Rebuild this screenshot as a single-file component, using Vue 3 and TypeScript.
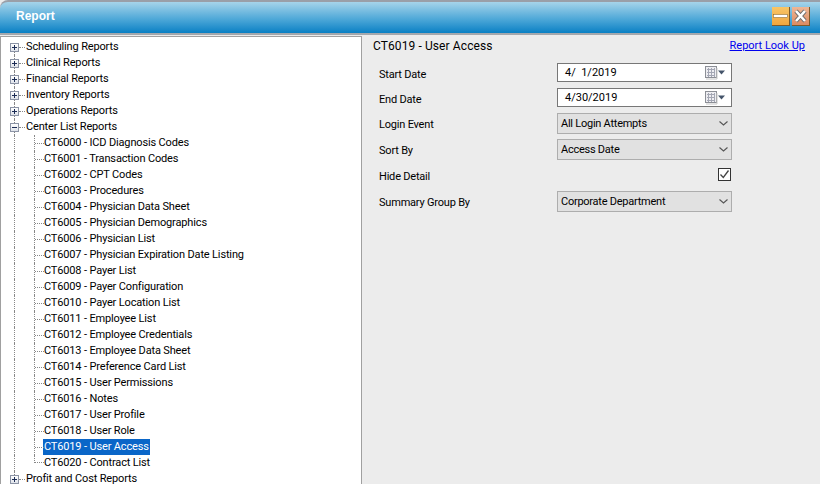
<script setup lang="ts">
const topBefore = ['Scheduling Reports', 'Clinical Reports', 'Financial Reports', 'Inventory Reports', 'Operations Reports']
const children = [
  'CT6000 - ICD Diagnosis Codes', 'CT6001 - Transaction Codes', 'CT6002 - CPT Codes', 'CT6003 - Procedures',
  'CT6004 - Physician Data Sheet', 'CT6005 - Physician Demographics', 'CT6006 - Physician List',
  'CT6007 - Physician Expiration Date Listing', 'CT6008 - Payer List', 'CT6009 - Payer Configuration',
  'CT6010 - Payer Location List', 'CT6011 - Employee List', 'CT6012 - Employee Credentials',
  'CT6013 - Employee Data Sheet', 'CT6014 - Preference Card List', 'CT6015 - User Permissions',
  'CT6016 - Notes', 'CT6017 - User Profile', 'CT6018 - User Role', 'CT6019 - User Access', 'CT6020 - Contract List'
]
</script>

<template>
  <div class="window">
    <header class="titlebar">
      <span class="title">Report</span>
      <div class="controls">
        <button class="ctl min"><svg width="17" height="18" viewBox="0 0 17 18"><rect x="1.500" y="7.500" width="14" height="3" fill="#fff" stroke="#7a5a20" stroke-width=".5"/></svg></button>
        <button class="ctl close"><svg width="17" height="18" viewBox="0 0 17 18"><path d="M4 4l9 10M13 4L4 14" stroke="#6b6b6b" stroke-width="4.200"/><path d="M4 4l9 10M13 4L4 14" stroke="#fff" stroke-width="2.600"/></svg></button>
      </div>
    </header>
    <main class="body">
      <aside class="tree">
        <div v-for="t in topBefore" :key="t" class="row root">
          <span class="box"><i class="h"></i><i class="v"></i></span><span class="dash"></span><span class="label">{{ t }}</span>
        </div>
        <div class="row root">
          <span class="box"><i class="h"></i></span><span class="dash"></span><span class="label">Center List Reports</span>
        </div>
        <div v-for="(c, i) in children" :key="c" class="row child" :class="{ last: i === children.length - 1 }">
          <span class="elbow"></span>
          <span class="label" :class="{ selected: c.startsWith('CT6019') }">{{ c }}</span>
        </div>
        <div class="row root">
          <span class="box"><i class="h"></i><i class="v"></i></span><span class="dash"></span><span class="label">Profit and Cost Reports</span>
        </div>
      </aside>
      <section class="panel">
        <div class="head">
          <span class="heading">CT6019 - User Access</span>
          <a class="link" href="#">Report Look Up</a>
        </div>
        <div class="form">
          <label>Start Date</label>
          <div class="date"><span>4/&nbsp;&nbsp;1/2019</span>
            <svg width="27" height="15" viewBox="0 0 27 15"><rect x="1.500" y="1.500" width="11" height="11" fill="#eeeef2" stroke="#8c8f96"/><path d="M3 4.500h8M3 7.500h8M3 10.500h8M4.500 3v9M7.500 3v9M10.500 3v9" stroke="#a4a7b4"/><path d="M2 14h11V3" fill="none" stroke="#c8c8c8"/><path d="M14 5.500h7l-3.500 4z" fill="#44546a"/></svg>
          </div>
          <label>End Date</label>
          <div class="date"><span>4/30/2019</span>
            <svg width="27" height="15" viewBox="0 0 27 15"><rect x="1.500" y="1.500" width="11" height="11" fill="#eeeef2" stroke="#8c8f96"/><path d="M3 4.500h8M3 7.500h8M3 10.500h8M4.500 3v9M7.500 3v9M10.500 3v9" stroke="#a4a7b4"/><path d="M2 14h11V3" fill="none" stroke="#c8c8c8"/><path d="M14 5.500h7l-3.500 4z" fill="#44546a"/></svg>
          </div>
          <label>Login Event</label>
          <div class="select"><span>All Login Attempts</span><svg width="9" height="5" viewBox="0 0 9 5"><path d="M.5.500l4 3.500 4-3.500" fill="none" stroke="#555" stroke-width="1.100"/></svg></div>
          <label>Sort By</label>
          <div class="select"><span>Access Date</span><svg width="9" height="5" viewBox="0 0 9 5"><path d="M.5.500l4 3.500 4-3.500" fill="none" stroke="#555" stroke-width="1.100"/></svg></div>
          <label>Hide Detail</label>
          <div class="check-cell"><span class="check"><svg width="11" height="11" viewBox="0 0 11 11"><path d="M1.500 5.500l2.800 3 5.200-7" fill="none" stroke="#444" stroke-width="1.300"/></svg></span></div>
          <label>Summary Group By</label>
          <div class="select"><span>Corporate Department</span><svg width="9" height="5" viewBox="0 0 9 5"><path d="M.5.500l4 3.500 4-3.500" fill="none" stroke="#555" stroke-width="1.100"/></svg></div>
        </div>
      </section>
    </main>
  </div>
</template>

<style>
html, body { margin: 0; background: #ececec; }
</style>

<style scoped>
.window {
  width: 820px; height: 484px; overflow: hidden; display: flex; flex-direction: column;
  background: #ececec; font: 11px Roboto, "Liberation Sans", Arial, sans-serif; color: #000;
}
.titlebar {
  height: 31px; flex: none; display: flex; align-items: center; justify-content: space-between;
  padding: 0 10px 0 16px; border-top: 2px solid #9a9fa8; border-bottom: 2px solid #a4a8ad;
  border-top-left-radius: 8px; background: linear-gradient(#a6d4ea, #4ea8d8 55%, #0a80c4);
}
.title { color: #fff; font: 700 12px "Liberation Sans", Arial, sans-serif; margin-bottom: 4px; }
.controls { display: flex; gap: 2px; margin-bottom: 2px; }
.ctl {
  width: 17px; height: 18px; padding: 0; display: block; border: 0; border-right: 1px solid #7b5a2a;
  border-bottom: 1px solid #7b5a2a; box-sizing: content-box;
}
.ctl svg { display: block; }
.min { background: linear-gradient(#f8c566, #f0a63f); }
.close { background: linear-gradient(#eeb696, #dc8b62); }
.body { flex: 1; display: flex; min-height: 0; padding-top: 1px; }
.tree {
  width: 360px; flex: none; background: #fff; padding-top: 2px;
  border: solid #a0a0a0; border-width: 1px 1px 0 1px; overflow: hidden;
}
.row { height: 16px; display: flex; align-items: center; white-space: nowrap; position: relative; letter-spacing: -0.15px; }
.root { padding-left: 9px; }
.root::before {
  content: ""; position: absolute; left: 13px; top: 0; bottom: 0; border-left: 1px dotted #888;
}
.root:first-child::before { top: 8px; }
.box {
  width: 7px; height: 7px; border: 1px solid #8c94a6; background: linear-gradient(#fff, #dfe3ea);
  flex: none; position: relative; z-index: 1;
}
.box .h { position: absolute; left: 1px; top: 3px; width: 5px; height: 1px; background: #1c2c55; }
.box .v { position: absolute; left: 3px; top: 1px; width: 1px; height: 5px; background: #1c2c55; }
.dash { width: 6px; margin-right: 0; border-top: 1px dotted #888; flex: none; }
.label { padding: 0 1px; line-height: 16px; }
.child { padding-left: 42px; }
.child::before {
  content: ""; position: absolute; left: 13px; top: 0; bottom: 0; border-left: 1px dotted #888;
}
.elbow {
  position: absolute; left: 33px; top: 0; bottom: 0; width: 9px; border-left: 1px dotted #888;
}
.last .elbow { bottom: 8px; border-bottom: 1px dotted #888; }
.child:not(.last) .elbow::after {
  content: ""; position: absolute; left: 0; top: 8px; width: 9px; border-top: 1px dotted #888;
}
.selected { background: #0a66c8; color: #fff; }
.panel { flex: 1; min-width: 0; padding: 1px 15px 0 11px; }
.head { display: flex; justify-content: space-between; align-items: center; height: 17px; }
.heading { font-size: 12px; letter-spacing: 0.1px; }
.link { color: #0000ee; text-decoration: underline; }
.form {
  margin: 9px 0 0 6px; display: grid; grid-template-columns: 178px 175px;
  grid-template-rows: 25px 25px 26px 26px 26px 21px;
  align-items: start; letter-spacing: -0.2px;
}
.form label { line-height: 24px; }
.date {
  height: 19px; box-sizing: border-box; border: 1px solid #777; background: #fff; display: flex;
  align-items: center; justify-content: space-between; padding: 0 0 0 7px; letter-spacing: 0;
}
.select {
  height: 21px; box-sizing: border-box; border: 1px solid #adadad; background: #e1e1e1; display: flex;
  align-items: center; justify-content: space-between; padding: 0 3px 0 3px; letter-spacing: -0.25px;
}
.check-cell { display: flex; justify-content: flex-end; padding: 3px 1px 0 0; }
.check {
  width: 11px; height: 11px; border: 1px solid #333; background: #fff; display: block;
}
.check svg { display: block; }
</style>
